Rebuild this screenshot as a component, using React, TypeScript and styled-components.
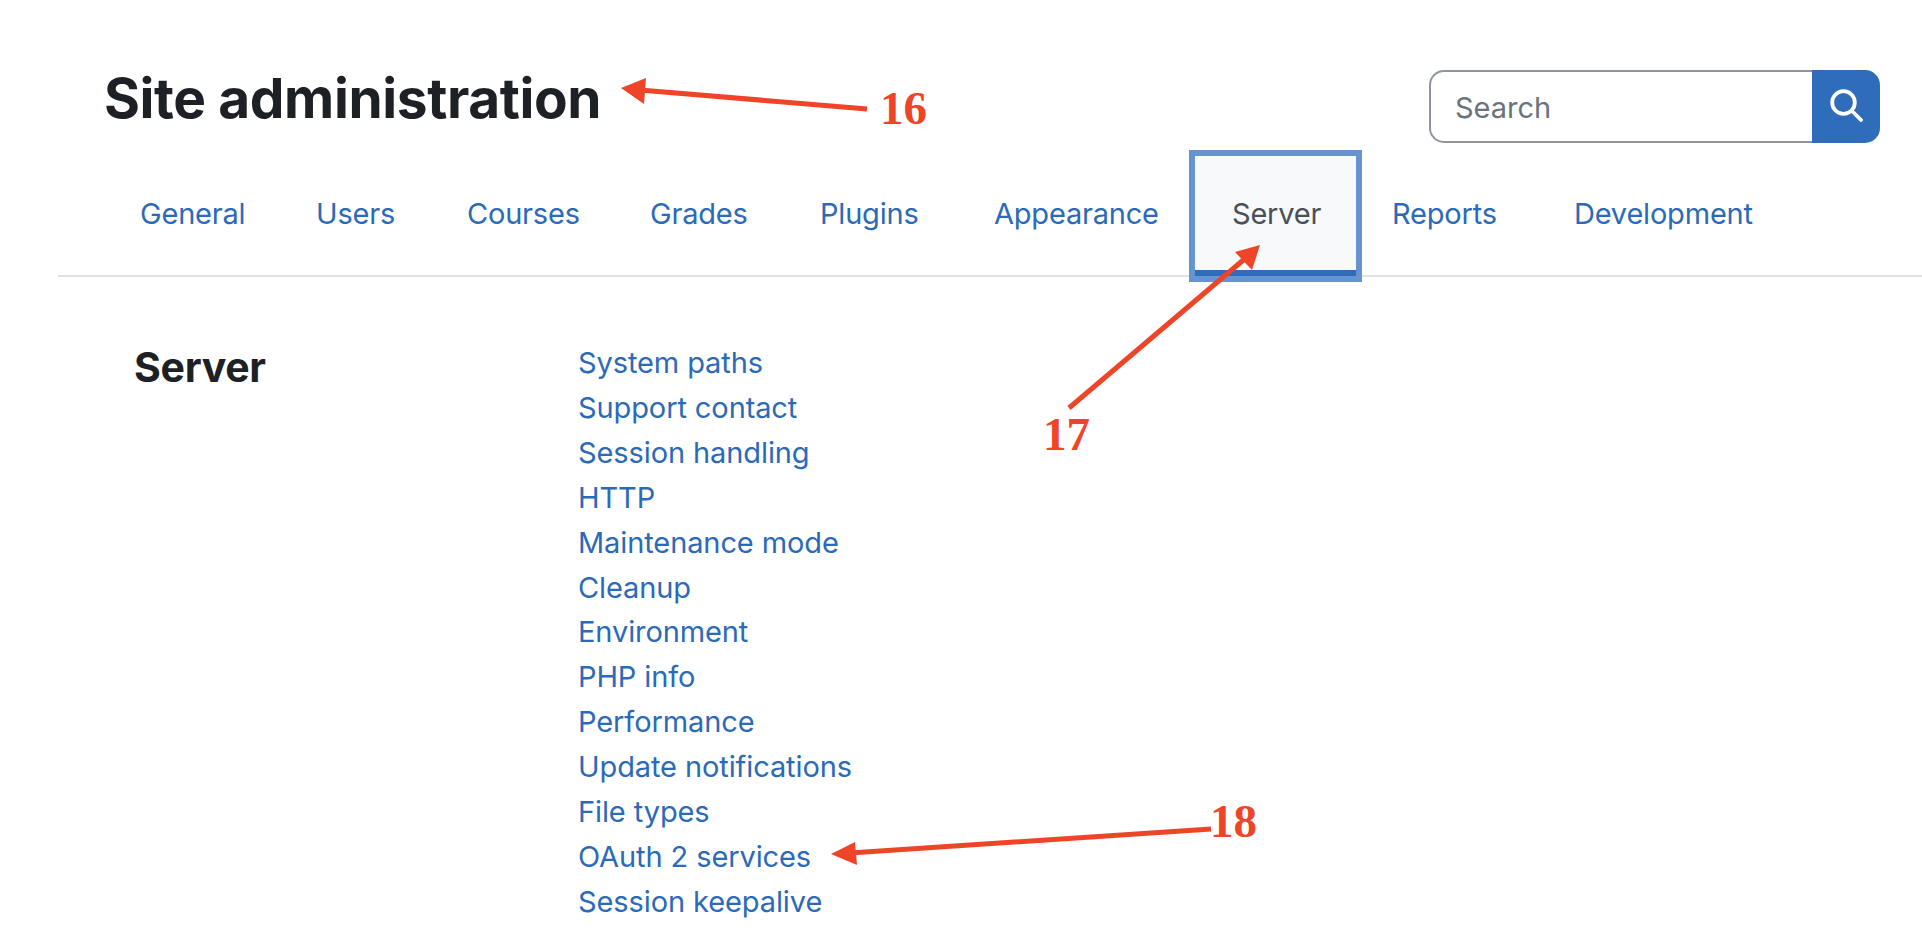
import React from 'react'
import styled, { createGlobalStyle } from 'styled-components'

const GlobalStyle = createGlobalStyle`
  html, body {
    margin: 0;
    padding: 0;
    background: #fff;
    font-family: Inter, "Noto Sans", "Liberation Sans", sans-serif;
  }
`

const Page = styled.div`
  position: relative;
  height: 950px;
  overflow: hidden;
  color: #1d2125;
`

const Header = styled.header`
  display: flex;
  justify-content: space-between;
  align-items: flex-start;
  height: 156px;
  padding: 70px 42px 0 104px;
  box-sizing: border-box;
`

const Title = styled.h1`
  margin: -2px 0 0;
  font-size: 55px;
  line-height: 60px;
  font-weight: 700;
  letter-spacing: -0.4px;
`

const SearchForm = styled.form`
  display: flex;
  width: 451px;
  height: 73px;
`

const SearchInput = styled.input`
  flex: 1;
  min-width: 0;
  box-sizing: border-box;
  border: 2px solid #8f959e;
  border-right: 0;
  border-radius: 15px 0 0 15px;
  padding: 1px 24px 0;
  font: inherit;
  font-size: 29px;
  color: #495057;
  outline: none;

  &::placeholder {
    color: #6a737b;
    opacity: 1;
  }
`

const SearchButton = styled.button`
  width: 68px;
  border: 0;
  padding: 0 0 3px;
  border-radius: 0 15px 15px 0;
  background: #2f6cb9;
  display: flex;
  align-items: center;
  justify-content: center;
`

const Nav = styled.nav`
  display: flex;
  margin-left: 58px;
  padding-left: 46px;
  height: 119px;
  border-bottom: 2px solid #dee2e6;
`

const Tab = styled.a<{ $active?: boolean; $width?: number }>`
  position: relative;
  box-sizing: border-box;
  width: ${p => (p.$width ? `${p.$width}px` : 'auto')};
  height: 120px;
  padding: 1px 0 0 ${p => (p.$active ? 37 : 36)}px;
  display: flex;
  align-items: center;
  font-size: 29px;
  letter-spacing: -0.2px;
  color: ${p => (p.$active ? '#495057' : '#2b6ab8')};
  background: ${p => (p.$active ? '#f8f9fa' : 'transparent')};
  border-bottom: 6px solid ${p => (p.$active ? '#2f6cb9' : 'transparent')};
  box-shadow: ${p => (p.$active ? '0 0 0 6px #6594d0' : 'none')};
`

const Content = styled.main`
  display: grid;
  grid-template-columns: 444px 1fr;
  padding: 64px 0 0 134px;
`

const SectionTitle = styled.h2`
  margin: 0;
  font-size: 41px;
  line-height: 52px;
  font-weight: 700;
  letter-spacing: -0.3px;
`

const LinkList = styled.ul`
  list-style: none;
  margin: 0;
  padding: 0;
`

const LinkItem = styled.li`
  font-size: 29px;
  line-height: 44.9px;
  letter-spacing: -0.1px;
  color: #2b6ab8;
`

const Callout = styled.span<{ $x: number; $y: number }>`
  position: absolute;
  left: ${p => p.$x}px;
  top: ${p => p.$y}px;
  font-family: "Liberation Serif", serif;
  font-weight: 700;
  font-size: 47px;
  line-height: 50px;
  color: #ee4528;
`

const Arrows = styled.svg`
  position: absolute;
  inset: 0;
  pointer-events: none;
`

const tabs = [
  { label: 'General', width: 176 },
  { label: 'Users', width: 151 },
  { label: 'Courses', width: 183 },
  { label: 'Grades', width: 170 },
  { label: 'Plugins', width: 174 },
  { label: 'Appearance', width: 237 },
  { label: 'Server', width: 161 },
  { label: 'Reports', width: 182 },
  { label: 'Development' },
]
const links = [
  'System paths',
  'Support contact',
  'Session handling',
  'HTTP',
  'Maintenance mode',
  'Cleanup',
  'Environment',
  'PHP info',
  'Performance',
  'Update notifications',
  'File types',
  'OAuth 2 services',
  'Session keepalive',
]

const App = () => (
  <Page>
    <GlobalStyle />
    <Header>
      <Title>Site administration</Title>
      <SearchForm onSubmit={e => e.preventDefault()}>
        <SearchInput placeholder="Search" />
        <SearchButton type="button" aria-label="Search">
          <svg width="33" height="33" viewBox="0 0 33 33" fill="none" stroke="#fff" strokeWidth="3.8" strokeLinecap="round">
            <circle cx="13.5" cy="13.5" r="11.3" />
            <path d="M22 22 L31 31" />
          </svg>
        </SearchButton>
      </SearchForm>
    </Header>
    <Nav>
      {tabs.map(t => (
        <Tab key={t.label} $width={t.width} $active={t.label === 'Server'}>
          {t.label}
        </Tab>
      ))}
    </Nav>
    <Content>
      <SectionTitle>Server</SectionTitle>
      <LinkList>
        {links.map(l => (
          <LinkItem key={l}>{l}</LinkItem>
        ))}
      </LinkList>
    </Content>

    {/* annotation arrows painted over the screenshot */}
    <Arrows width="1922" height="950" viewBox="0 0 1922 950">
      <g stroke="#ee4528" strokeWidth="5" fill="#ee4528">
        <path d="M867 109 L640 90" />
        <path d="M621 88 L646 78 L644 104 Z" stroke="none" />
        <path d="M1069 408 L1248 256" />
        <path d="M1260 245 L1252 270 L1235 252 Z" stroke="none" />
        <path d="M1211 829 L850 853" />
        <path d="M831 854 L855 842 L857 865 Z" stroke="none" />
      </g>
    </Arrows>
    <Callout $x={880} $y={83}>16</Callout>
    <Callout $x={1043} $y={409}>17</Callout>
    <Callout $x={1210} $y={796}>18</Callout>
  </Page>
)

export default App
